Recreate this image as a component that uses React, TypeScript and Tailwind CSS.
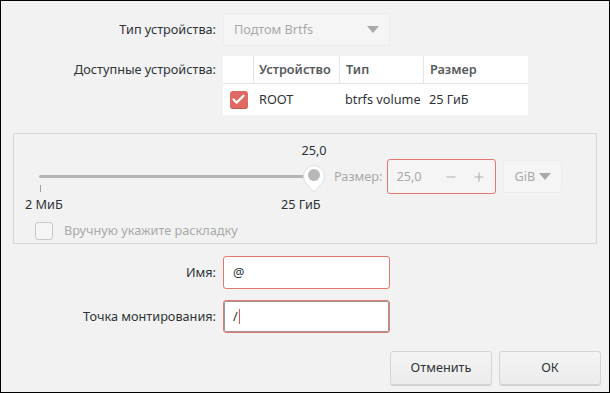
import { Check, Minus, Plus } from "lucide-react";

const font = "font-['Noto_Sans',sans-serif]";

function Caret({ className = "" }: { className?: string }) {
  return (
    <svg width="12" height="7" viewBox="0 0 12 7" className={className}>
      <path d="M0 0h12L6 7z" fill="currentColor" />
    </svg>
  );
}

function Label({ children }: { children: React.ReactNode }) {
  return <div className="w-[216px] shrink-0 pr-[1px] text-right text-[#2e3436]">{children}</div>;
}

export default function App() {
  return (
    <div
      className={`${font} flex h-[393px] w-[610px] flex-col border border-black bg-[#f2f2f2] text-[12.7px] text-[#2e3436]`}
    >
      {/* Тип устройства */}
      <div className="mt-[12px] flex items-center gap-[6px]">
        <Label>Тип устройства:</Label>
        <div className="flex h-[33px] w-[167px] items-center justify-between rounded-[3px] border border-[#ececec] bg-[#f5f5f5] pl-[10px] pr-[10px] text-[#a7aaa8]">
          <span>Подтом Brtfs</span>
          <Caret className="text-[#a7aaa8]" />
        </div>
      </div>

      {/* Доступные устройства */}
      <div className="mt-[10px] flex items-start gap-[6px]">
        <div className="flex h-[28px] items-center">
          <Label>Доступные устройства:</Label>
        </div>
        <div className="w-[305px] bg-white">
          <div className="flex h-[28px] border-b border-[#e4e4e4] font-semibold text-[#555a5c]">
            <div className="w-[31px] border-r border-[#e4e4e4]" />
            <div className="flex w-[86px] items-center border-r border-[#e4e4e4] pl-[5px]">Устройство</div>
            <div className="flex w-[84px] items-center border-r border-[#e4e4e4] pl-[6px]">Тип</div>
            <div className="flex flex-1 items-center pl-[6px]">Размер</div>
          </div>
          <div className="flex h-[31px] items-center">
            <div className="flex w-[31px] justify-center">
              <div className="flex h-[18px] w-[18px] items-center justify-center rounded-[3px] bg-[#e06a63] shadow-[inset_0_-1px_0_rgba(0,0,0,0.15)]">
                <Check size={15} strokeWidth={3.5} color="#ffffff" />
              </div>
            </div>
            <div className="w-[86px] pl-[5px]">ROOT</div>
            <div className="w-[84px] pl-[5px]">btrfs volume</div>
            <div className="flex-1 pl-[5px]">25 ГиБ</div>
          </div>
        </div>
      </div>

      {/* Размер */}
      <div className="mx-[12px] mt-[18px] flex h-[111px] flex-col border border-[#d6d6d6] px-[11px] pt-[11px]">
        <div className="flex items-center">
          <div className="relative h-[69px] w-[302px] shrink-0">
            <div className="absolute left-[276px] top-[-4px] w-[26px] text-center text-[#2e3436]">25,0</div>
            <div className="absolute left-[14px] top-[30px] h-[3px] w-[276px] rounded-full bg-[#b4b4b4]" />
            <svg
              className="absolute left-[277px] top-[18px]"
              width="24"
              height="30"
              viewBox="0 0 24 30"
            >
              <path
                d="M12 29 L4.5 20.5 A10.5 10.5 0 1 1 19.5 20.5 Z"
                fill="#ffffff"
                stroke="#dadada"
                strokeWidth="0.8"
              />
              <circle cx="12" cy="12" r="6" fill="#b8b8b8" />
            </svg>
            <div className="absolute left-[15px] top-[40px] h-[7px] w-px bg-[#a0a0a0]" />
            <div className="absolute left-0 top-[50px] text-[#2e3436]">2 МиБ</div>
            <div className="absolute left-[256px] top-[50px] text-[#2e3436]">25 ГиБ</div>
          </div>
          <div className="-mt-[6px] ml-[7px] flex items-center">
            <span className="text-[#a7aaa8]">Размер:</span>
            <div className="ml-[5px] flex h-[35px] w-[109px] items-center rounded-[3px] border border-[#e2786f] bg-[#f5f5f5] pl-[8px] text-[#a7aaa8]">
              <span className="w-[44px]">25,0</span>
              <Minus size={14} color="#b0b0b0" className="ml-[4px]" />
              <Plus size={14} color="#b0b0b0" className="ml-[14px]" />
            </div>
            <div className="ml-[7px] flex h-[33px] w-[59px] items-center justify-center gap-[4px] rounded-[3px] border border-[#ececec] bg-[#f5f5f5] text-[#a7aaa8]">
              <span>GiB</span>
              <Caret className="text-[#a7aaa8]" />
            </div>
          </div>
        </div>
        <div className="ml-[10px] mt-[7px] flex items-center gap-[11px]">
          <div className="h-[18px] w-[18px] rounded-[3px] border border-[#c8c8c8] bg-[#f5f5f5]" />
          <span className="text-[#a7aaa8]">Вручную укажите раскладку</span>
        </div>
      </div>

      {/* Имя */}
      <div className="mt-[12px] flex items-center gap-[6px]">
        <Label>Имя:</Label>
        <div className="flex h-[33px] w-[167px] items-center rounded-[3px] border border-[#e2786f] bg-white pl-[9px]">
          @
        </div>
      </div>

      {/* Точка монтирования */}
      <div className="mt-[11px] flex items-center gap-[6px]">
        <Label>Точка монтирования:</Label>
        <div className="flex h-[33px] w-[167px] items-center rounded-[3px] border border-[#e2786f] bg-white pl-[9px] shadow-[inset_0_0_0_1px_#9a9a9a]">
          <span>/</span>
          <span className="ml-[1px] h-[15px] w-px bg-[#e2564e]" />
        </div>
      </div>

      {/* Кнопки */}
      <div className="mr-[8px] mt-auto mb-[7px] flex justify-end gap-[7px]">
        <button className="h-[34px] w-[102px] rounded-[3px] border border-[#d4d4d4] bg-gradient-to-b from-[#f4f4f4] to-[#ececec] text-[#2e3436] shadow-[0_1px_0_#cfcfcf]">
          Отменить
        </button>
        <button className="h-[34px] w-[102px] rounded-[3px] border border-[#d4d4d4] bg-gradient-to-b from-[#f4f4f4] to-[#ececec] text-[#2e3436] shadow-[0_1px_0_#cfcfcf]">
          ОК
        </button>
      </div>
    </div>
  );
}
